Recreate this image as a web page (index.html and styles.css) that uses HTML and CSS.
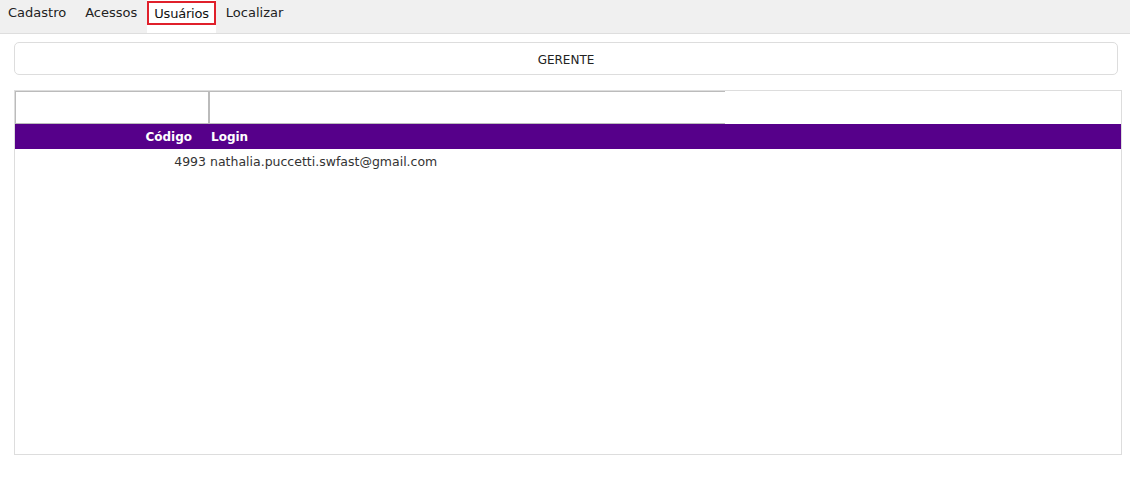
FILE: index.html
```html
<!DOCTYPE html>
<html lang="pt">

<head>
    <meta charset="UTF-8">
    <title>Usuários</title>
    <link rel="stylesheet" href="styles.css">
</head>

<body>
    <div class="tabs">
        <a class="tab">Cadastro</a>
        <a class="tab">Acessos</a>
        <a class="tab active"><span class="focus">Usuários</span></a>
        <a class="tab">Localizar</a>
    </div>
    <div class="content">
        <div class="group">GERENTE</div>
        <div class="grid">
            <div class="filters">
                <input class="filter f-code" type="text">
                <input class="filter f-login" type="text">
            </div>
            <div class="row head">
                <div class="c-code">Código</div>
                <div class="c-login">Login</div>
            </div>
            <div class="row">
                <div class="c-code">4993</div>
                <div class="c-login">nathalia.puccetti.swfast@gmail.com</div>
            </div>
        </div>
    </div>
</body>

</html>
```
FILE: styles.css
```css
body {
    margin: 0;
    font-family: 'DejaVu Sans', sans-serif;
    font-size: 12px;
    color: #333;
    background-color: #fff;
}

.tabs {
    display: flex;
    gap: 2px;
    height: 33px;
    background-color: #f0f0f0;
    border-bottom: 1px solid #dedede;
}

.tab {
    padding: 5px 8px 0 8px;
    height: 28px;
    color: #222;
    font-size: 13px;
}

.tab:first-child {
    margin-right: 1px;
}

.tab.active {
    background-color: #fff;
    height: 33px;
    margin-bottom: -1px;
    padding: 0;
}

.focus {
    display: block;
    padding: 3px 5px 2px 5px;
    border: 2px solid #e0202b;
    margin-top: 1px;
    color: #111;
    letter-spacing: -0.2px;
}

.content {
    padding: 8px 8px 0 14px;
}

.group {
    height: 31px;
    line-height: 34px;
    border: 1px solid #ddd;
    border-radius: 5px;
    text-align: center;
    font-size: 12px;
    color: #222;
    margin-right: 4px;
}

.grid {
    margin-top: 15px;
    height: 363px;
    border: 1px solid #ddd;
}

.filters {
    display: flex;
    height: 33px;
}

.filter {
    box-sizing: border-box;
    height: 33px;
    margin: 0;
    border: 1px solid #bbb;
    border-right: none;
    outline: none;
}

.f-code {
    width: 193px;
}

.f-login {
    width: 517px;
    border-left: 2px solid #bbb;
}

.row {
    display: flex;
    height: 24px;
    line-height: 25px;
    font-size: 12.5px;
}

.row.head {
    height: 25px;
    line-height: 27px;
    font-size: 12px;
    background-color: #56008a;
    color: #fff;
    font-weight: bold;
}

.c-code {
    width: 191px;
    text-align: right;
}

.head .c-code {
    width: 177px;
    padding-right: 15px;
}

.c-login {
    padding-left: 4px;
}
```
